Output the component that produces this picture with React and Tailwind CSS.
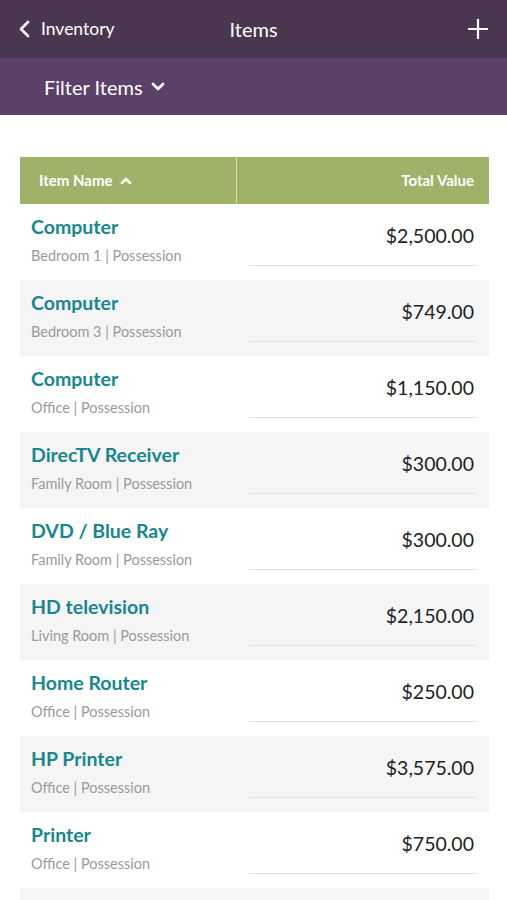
import React from "react";

const items = [
  { name: "Computer", place: "Bedroom 1", value: "$2,500.00" },
  { name: "Computer", place: "Bedroom 3", value: "$749.00" },
  { name: "Computer", place: "Office", value: "$1,150.00" },
  { name: "DirecTV Receiver", place: "Family Room", value: "$300.00" },
  { name: "DVD / Blue Ray", place: "Family Room", value: "$300.00" },
  { name: "HD television", place: "Living Room", value: "$2,150.00" },
  { name: "Home Router", place: "Office", value: "$250.00" },
  { name: "HP Printer", place: "Office", value: "$3,575.00" },
  { name: "Printer", place: "Office", value: "$750.00" },
];

const App = () => {
  return (
    <div className="w-[507px] h-[900px] overflow-hidden bg-white font-['Lato','Liberation_Sans',sans-serif]">
      {/* Top bar */}
      <div className="h-[58px] bg-[#4b3652] flex items-center px-[18px] text-white">
        <div className="flex-1 flex items-center gap-[10px]">
          <svg width="13" height="18" viewBox="0 0 13 18" fill="none">
            <path d="M10 2 L3 9 L10 16" stroke="white" strokeWidth="2.6" strokeLinecap="round" strokeLinejoin="round" />
          </svg>
          <span className="text-[17.5px]">Inventory</span>
        </div>
        <div className="text-[20px]">Items</div>
        <div className="flex-1 flex justify-end">
          <svg width="22" height="22" viewBox="0 0 22 22">
            <path d="M11 1 V21 M1 11 H21" stroke="white" strokeWidth="2.2" />
          </svg>
        </div>
      </div>

      {/* Filter bar */}
      <div className="h-[57px] bg-[#5d4068] flex items-center pl-[44px] gap-[8px] text-white">
        <span className="text-[20px]">Filter Items</span>
        <svg width="14" height="10" viewBox="0 0 14 10">
          <path d="M2 2 L7 7 L12 2" stroke="white" strokeWidth="2.8" fill="none" strokeLinecap="round" strokeLinejoin="round" />
        </svg>
      </div>

      {/* Table */}
      <div className="pl-[20px] pr-[18px] pt-[42px]">
        <div className="h-[47px] bg-[#9fb26a] flex text-white text-[15px] font-bold">
          <div className="w-[217px] border-r border-[#d7e0b8] flex items-center pl-[19px] gap-[7px]">
            <span>Item Name</span>
            <svg width="12" height="9" viewBox="0 0 12 9">
              <path d="M2 7 L6 3 L10 7" stroke="white" strokeWidth="2.6" fill="none" strokeLinecap="round" strokeLinejoin="round" />
            </svg>
          </div>
          <div className="flex-1 flex items-center justify-end pr-[15px]">Total Value</div>
        </div>

        {items.map((it, i) => (
          <div
            key={i}
            className={`h-[76px] flex ${i % 2 === 1 ? "bg-[#f5f5f5]" : "bg-white"}`}
          >
            <div className="flex-1 pl-[11px] pt-[11px]">
              <div className="text-[19.5px] font-bold text-[#18878d] leading-[24px]">{it.name}</div>
              <div className="text-[14.5px] text-[#9a9a9a] mt-[8px] leading-[18px]">
                {it.place} | Possession
              </div>
            </div>
            <div className="w-[228px] mr-[12px] flex flex-col">
              <div className="flex-1 flex items-end justify-end pr-[3px] pb-[15px] text-[19.5px] text-[#222]">
                {it.value}
              </div>
              <div className="h-[1px] bg-[#e3e3e3] mb-[14px]" />
            </div>
          </div>
        ))}
        <div className="h-[76px] bg-[#f5f5f5]" />
      </div>
    </div>
  );
};

export default App;
